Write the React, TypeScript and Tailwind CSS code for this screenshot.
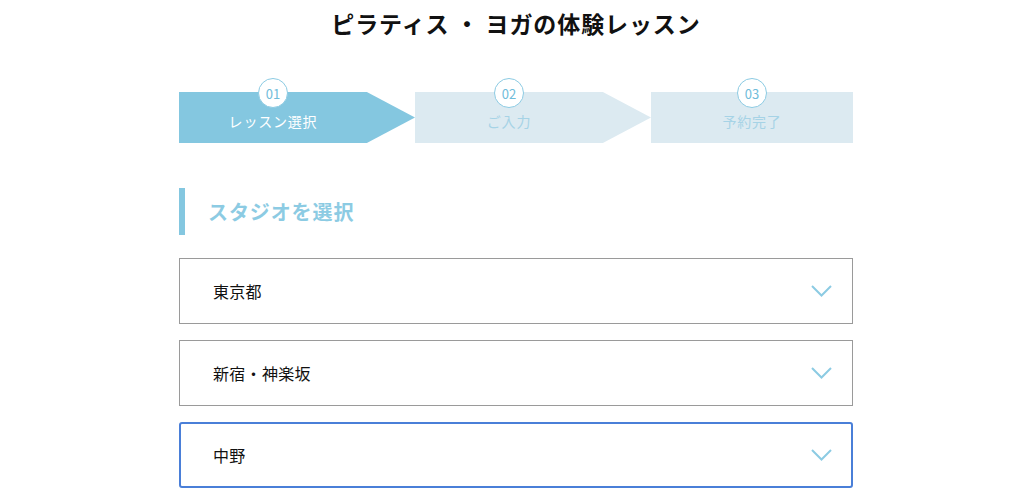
const steps = [
  { no: "01", label: "レッスン選択", active: true, arrow: true },
  { no: "02", label: "ご入力", active: false, arrow: true },
  { no: "03", label: "予約完了", active: false, arrow: false },
];

const options = [
  { label: "東京都", focused: false },
  { label: "新宿・神楽坂", focused: false },
  { label: "中野", focused: true },
];

function Chevron() {
  return (
    <svg width="21" height="12" viewBox="0 0 21 12" fill="none" className="shrink-0">
      <path d="M1 1 L10.5 10.5 L20 1" stroke="#8ccbe3" strokeWidth="2" />
    </svg>
  );
}

export default function App() {
  return (
    <div
      className="w-[1024px] h-[500px] overflow-hidden bg-white"
      style={{ fontFamily: '"Noto Sans CJK JP", "Noto Sans", sans-serif' }}
    >
      <h1 className="pt-[6px] pl-[8px] text-center text-[23px] leading-[34px] font-bold text-[#111] tracking-[0.9px]">
        ピラティス ・ ヨガの体験レッスン
      </h1>

      <div className="ml-[179px] mt-[52px] w-[674px]">
        {/* Steps */}
        <div className="flex">
          {steps.map((s) => (
            <div
              key={s.no}
              className={`relative h-[51px] ${s.arrow ? "w-[236px] pr-[48px]" : "flex-1"}`}
            >
              <div
                className={`absolute inset-0 ${s.active ? "bg-[#84c7e0]" : "bg-[#dceaf1]"} ${
                  s.arrow ? "[clip-path:polygon(0_0,79.6%_0,100%_50%,79.6%_100%,0_100%)]" : ""
                }`}
              />
              <div className="relative flex h-full flex-col items-center">
                <div className="-mt-[14px] flex h-[30px] w-[30px] items-center justify-center rounded-full border border-[#8ccbe3] bg-white text-[13px] leading-none text-[#6fbcda]">
                  {s.no}
                </div>
                <div
                  className={`mt-[4px] text-[14px] leading-[18px] tracking-[0.8px] ${
                    s.active ? "text-white" : "text-[#a6d3e6]"
                  }`}
                >
                  {s.label}
                </div>
              </div>
            </div>
          ))}
        </div>

        {/* Section heading */}
        <div className="mt-[45px] flex h-[47px] items-center border-l-[6px] border-[#84c7e0] pl-[23px]">
          <h2 className="text-[20px] font-bold tracking-[0.9px] text-[#8ccbe3]">スタジオを選択</h2>
        </div>

        {/* Selects */}
        <div className="mt-[23px] flex flex-col gap-[16px]">
          {options.map((o) => (
            <div
              key={o.label}
              className={`flex h-[66px] items-center justify-between ${
                o.focused
                  ? "rounded-[3px] border-2 border-[#4a7fd8] pl-[32px] pr-[19px]"
                  : "border border-[#9a9a9a] pl-[33px] pr-[20px]"
              }`}
            >
              <span className="text-[16px] tracking-[0.3px] text-[#111]">{o.label}</span>
              <Chevron />
            </div>
          ))}
        </div>
      </div>
    </div>
  );
}
